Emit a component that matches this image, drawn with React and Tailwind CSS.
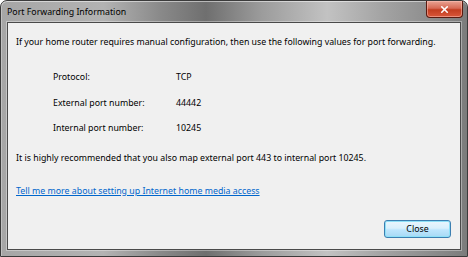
import { X } from 'lucide-react'

const ROWS = [
  { label: 'Protocol:', value: 'TCP' },
  { label: 'External port number:', value: '44442' },
  { label: 'Internal port number:', value: '10245' },
]

const font = { fontFamily: '"Noto Sans", "Open Sans", sans-serif' }

function CloseX() {
  return (
    <div className="w-[37px] h-[17px] rounded-b-[4px] border border-t-0 border-[#5a1a10] bg-[linear-gradient(to_bottom,#e8a393_0%,#d66a55_45%,#c23d20_55%,#d9573a_100%)] flex items-center justify-center shadow-[inset_0_0_0_1px_rgba(255,200,190,0.5)]">
      <X className="w-[11px] h-[11px] text-white" strokeWidth={3.5} />
    </div>
  )
}

export default function App() {
  return (
    <div className="w-[468px] h-[257px] overflow-hidden bg-white" style={font}>
      <div className="w-[468px] h-[257px] flex flex-col rounded-t-[7px] border border-[#3b3b3b] bg-[linear-gradient(to_right,#a6a6a6_0%,#b3b3b3_22%,#8a8a8a_34%,#6f6f6f_44%,#9c9c9c_56%,#c2c2c2_70%,#a3a3a3_82%,#7c7c7c_100%)] shadow-[inset_0_1px_0_rgba(255,255,255,0.5),inset_1px_0_0_rgba(255,255,255,0.3)]">
        <div className="h-[21px] flex items-start justify-between pl-[6px] pr-[4px]">
          <span className="text-[8.8px] leading-[22px] text-black">Port Forwarding Information</span>
          <CloseX />
        </div>
        <div className="flex-1 mx-[6px] mb-[6px] border border-[#4a4a4a] bg-[#f0f0f0] flex flex-col px-[8px] pt-[12px] text-[8.8px] text-black shadow-[0_0_0_1px_rgba(255,255,255,0.35)]">
          <div className="h-[14px] leading-[14px]">If your home router requires manual configuration, then use the following values for port forwarding.</div>
          <div className="mt-[21px] flex flex-col gap-[11.5px] pl-[37px]">
            {ROWS.map(r => (
              <div key={r.label} className="h-[14px] leading-[14px] flex">
                <span className="w-[123px]">{r.label}</span>
                <span>{r.value}</span>
              </div>
            ))}
          </div>
          <div className="mt-[16px] h-[14px] leading-[14px]">It is highly recommended that you also map external port 443 to internal port 10245.</div>
          <div className="mt-[19px] h-[14px] leading-[14px]">
            <span className="text-[#0066cc] underline">Tell me more about setting up Internet home media access</span>
          </div>
          <div className="mt-[22px] flex justify-end pr-[1px]">
            <button className="w-[67px] h-[18px] rounded-[3px] border border-[#3c7fb1] bg-[linear-gradient(to_bottom,#eaf6fd_0%,#d9f0fc_45%,#bee6fd_55%,#a7d9f5_100%)] shadow-[inset_0_0_0_1px_#8ee0f7] text-[8.8px] leading-[16px] text-black">
              Close
            </button>
          </div>
        </div>
      </div>
    </div>
  )
}
